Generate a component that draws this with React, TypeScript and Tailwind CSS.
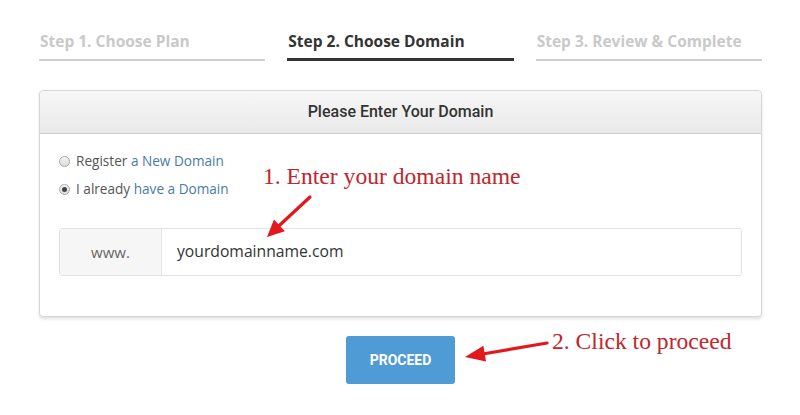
import React from 'react'

const STEPS = [
  { label: 'Step 1. Choose Plan', active: false },
  { label: 'Step 2. Choose Domain', active: true },
  { label: 'Step 3. Review & Complete', active: false },
]

// red annotation arrow: line from tail to tip, filled head at the tip
function Arrow({ x1, y1, x2, y2, head = 18, half = 8 }: { x1: number; y1: number; x2: number; y2: number; head?: number; half?: number }) {
  const dx = x2 - x1, dy = y2 - y1
  const len = Math.hypot(dx, dy)
  const ux = dx / len, uy = dy / len
  const bx = x2 - ux * head, by = y2 - uy * head
  const px = -uy * half, py = ux * half
  const pts = `${x2},${y2} ${bx + px},${by + py} ${bx - px},${by - py}`
  return (
    <g>
      <line x1={x1} y1={y1} x2={bx + ux * 2} y2={by + uy * 2} stroke="#e3171c" strokeWidth={3.2} strokeLinecap="round" />
      <polygon points={pts} fill="#e3171c" />
    </g>
  )
}

function Radio({ checked }: { checked?: boolean }) {
  return (
    <span className="inline-flex items-center justify-center w-[11px] h-[11px] rounded-full border border-[#a9a9a9] bg-gradient-to-b from-[#f4f4f4] to-[#dcdcdc] mr-[6px]">
      {checked && <span className="w-[5px] h-[5px] rounded-full bg-[#444]" />}
    </span>
  )
}

export default function App() {
  return (
    <div className="relative w-[800px] h-[415px] bg-white overflow-hidden" style={{ fontFamily: '"Open Sans", sans-serif' }}>
      <div className="ml-[39px] w-[723px]">
        {/* steps */}
        <div className="grid grid-cols-3 gap-[22px] pt-[31px]">
          {STEPS.map(s => (
            <div key={s.label}
              className={`pl-[1px] pb-[7px] text-[15.5px] leading-[20px] font-bold ${s.active ? 'text-[#333] border-b-[3px] border-[#333]' : 'text-[#c9c9c9] border-b-[2px] border-[#cfcfcf]'}`}>
              {s.label}
            </div>
          ))}
        </div>

        {/* domain panel */}
        <div className="mt-[29px] border border-[#d6d6d6] rounded-[4px] shadow-[0_2px_3px_rgba(0,0,0,0.12)] bg-white">
          <div className="h-[43px] flex items-center justify-center bg-gradient-to-b from-[#f7f7f7] to-[#e9e9e9] border-b border-[#cdcdcd] rounded-t-[4px] text-[16px] font-medium text-[#333]"
            style={{ fontFamily: 'Roboto, sans-serif' }}>
            Please Enter Your Domain
          </div>
          <div className="px-[19px] pt-[13px] pb-[40px]">
            <div className="h-[28px] flex items-center text-[13.6px] text-[#555]">
              <Radio />Register&nbsp;<span className="text-[#4a7ba7]">a New Domain</span>
            </div>
            <div className="h-[28px] flex items-center text-[13.6px] text-[#555]">
              <Radio checked />I already&nbsp;<span className="text-[#4a7ba7]">have a Domain</span>
            </div>
            <div className="mt-[25px] flex h-[48px] border border-[#e3e3e3] rounded-[3px]">
              <div className="w-[102px] flex items-center justify-center bg-[#f6f6f6] border-r border-[#e3e3e3] text-[15px] text-[#666]">
                www.
              </div>
              <div className="flex-1 flex items-center pl-[15px] text-[15.7px] text-[#333]">
                yourdomainname.com
              </div>
            </div>
          </div>
        </div>

        <div className="flex justify-center mt-[19px]">
          <button className="w-[109px] h-[48px] rounded-[3px] bg-[#4f9bd5] text-white text-[14px] font-bold"
            style={{ fontFamily: 'Roboto, sans-serif' }}>
            PROCEED
          </button>
        </div>
      </div>

      {/* annotations */}
      <div className="absolute left-[263px] top-[161px] text-[23.6px] leading-[30px] text-[#c0262c]" style={{ fontFamily: '"Liberation Serif", serif' }}>
        1. Enter your domain name
      </div>
      <div className="absolute left-[552px] top-[326px] text-[23.6px] leading-[30px] text-[#c0262c]" style={{ fontFamily: '"Liberation Serif", serif' }}>
        2. Click to proceed
      </div>
      <svg className="absolute left-0 top-0" width={800} height={415}>
        <Arrow x1={310} y1={197} x2={267} y2={237} head={17} half={8} />
        <Arrow x1={547} y1={343} x2={465} y2={357} head={20} half={8} />
      </svg>
    </div>
  )
}
